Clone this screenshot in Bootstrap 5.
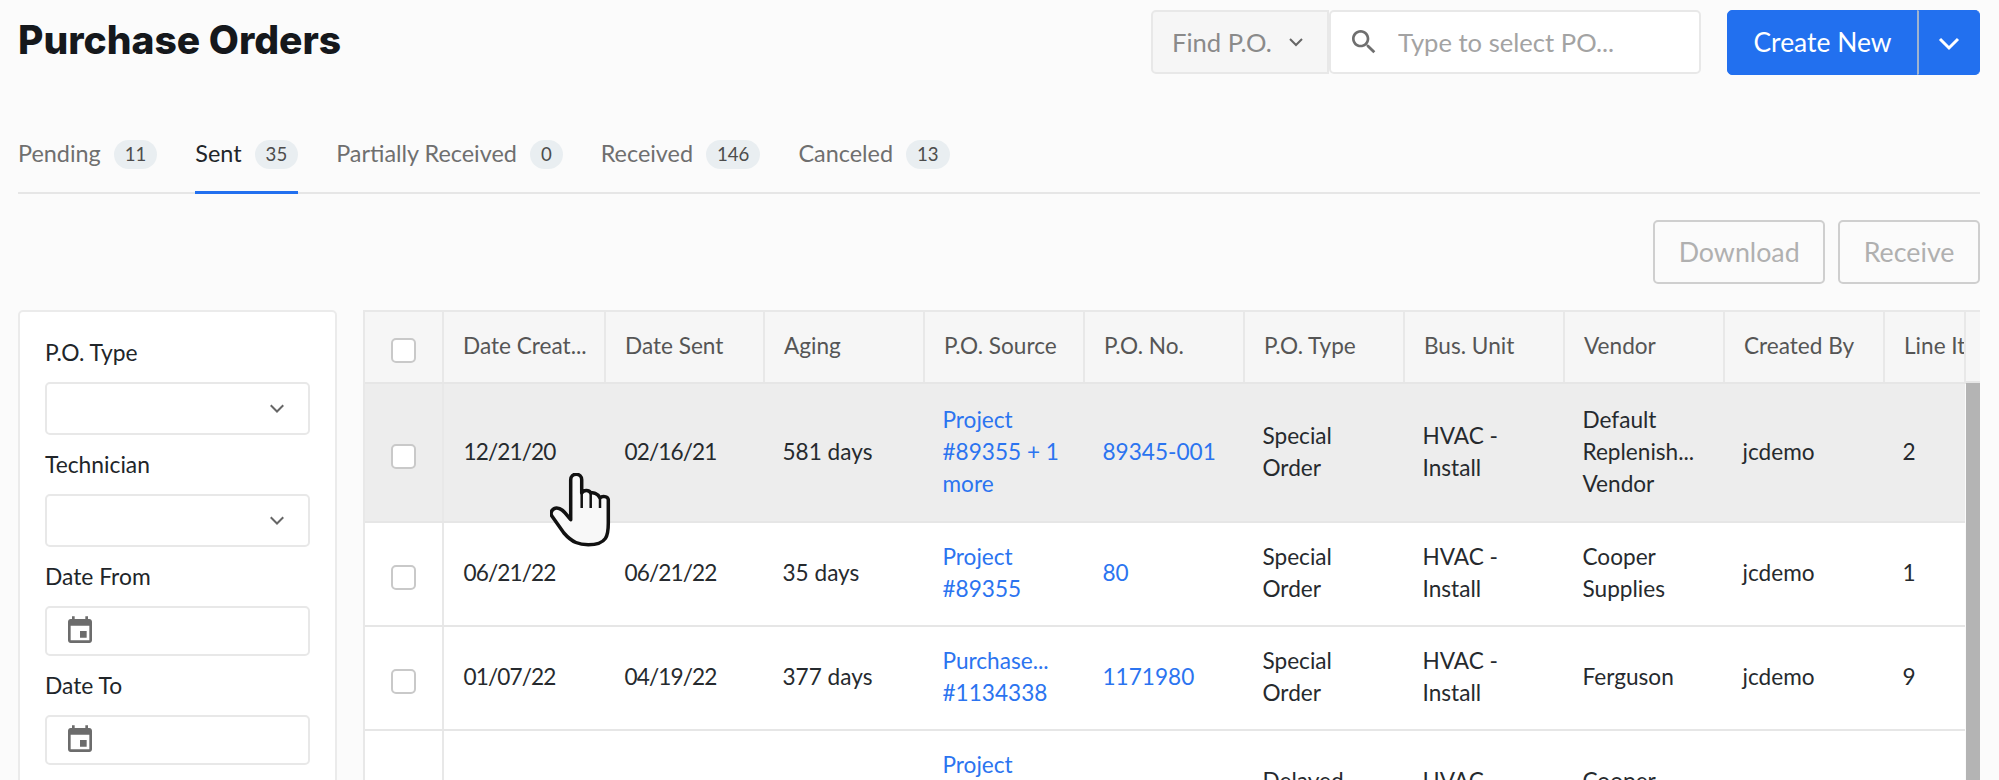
<!DOCTYPE html>
<html lang="en">
<head>
    <meta charset="UTF-8">
    <meta name="viewport" content="width=device-width, initial-scale=1.0">
    <title>Purchase Orders</title>
    <link href="https://cdn.jsdelivr.net/npm/bootstrap@5.3.3/dist/css/bootstrap.min.css" rel="stylesheet"/>
    <style>
        html, body { height: 100%; }
        body { background: #fbfbfb; font-family: "Lato", "Liberation Sans", sans-serif; font-size: 22.6px; color: #212529; overflow: hidden; position: relative; }
        .po-page { padding: 10px 19px 0 18px; height: 780px; overflow: hidden; }
        .po-head { height: 65px; }
        .po-title { font-family: "Inter", "Lato", sans-serif; font-size: 39px; font-weight: 800; color: #15181c; margin: 0; line-height: 60px; }
        .find-box { width: 178px; height: 64px; border: 2px solid #e8e8e8; border-radius: 5px 0 0 5px; background: #f6f6f6; color: #8a8a8a; font-size: 25.6px; padding-left: 19px; }
        .find-box svg { margin-left: 16px; }
        .find-input { width: 372px; height: 64px; border: 2px solid #e8e8e8; border-radius: 5px; background: #fff; padding-left: 17px; }
        .find-input input { border: 0; outline: 0; background: transparent; font-size: 25.6px; margin-left: 18px; width: 300px; padding: 0; color: #333; }
        .find-input input::placeholder { color: #a3a3a3; }
        .create-group { margin-left: 26px; }
        .btn.create-btn { background: #2270ef; border-color: #2270ef; color: #fff; font-size: 26.4px; height: 65px; width: 191px; border-radius: 5px 0 0 5px; padding: 0; }
        .btn.create-drop { background: #2270ef; border-color: #2270ef; border-left: 2px solid #9fb3cf; height: 65px; width: 63px; border-radius: 0 5px 5px 0; padding: 0; }
        .po-tabs { margin-top: 55px; border-bottom: 2px solid #e6e6e6; height: 64px; gap: 38px; }
        .po-tabs .nav-link { color: #6f6f6f; padding: 9px 0 0; height: 64px; font-size: 23.4px; display: flex; align-items: flex-start; gap: 13px; line-height: 29px; }
        .po-tabs .nav-link.active { color: #212529; border-bottom: 3px solid #2270ef; margin-bottom: -1px; }
        .tab-count { background: #e9eef1; color: #4c4c4c; font-size: 18.6px; border-radius: 15px; height: 29px; line-height: 29px; padding: 0 11px; margin-top: 1px; }
        .po-actions { margin-top: 26px; height: 64px; gap: 13px; }
        .btn.act-btn { height: 64px; border: 2px solid #cfcfcf; border-radius: 5px; background: transparent; color: #b0b0b0; font-size: 26.8px; padding: 0 23.5px; opacity: 1; }
        .po-main { margin-top: 26px; gap: 26px; }
        .filter-card { width: 319px; height: 600px; flex: none; border: 2px solid #ebebeb; border-radius: 5px; background: #fff; padding: 11px 25px; }
        .filter-card label { display: block; height: 59px; line-height: 59px; margin: 0; font-size: 22.8px; color: #212529; }
        .filter-select { height: 53px; border: 2px solid #e8e8e8; border-radius: 5px; background-color: #fff; background-size: 20px; background-position: right 21px center; background-image: url("data:image/svg+xml,%3csvg xmlns='http://www.w3.org/2000/svg' viewBox='0 0 16 16'%3e%3cpath fill='none' stroke='%23666' stroke-width='1.6' d='M3 5l5 5 5-5'/%3e%3c/svg%3e"); }
        .filter-date { height: 50px; border: 2px solid #e8e8e8; border-radius: 5px; background: #fff; padding-left: 17px; }
        .table-wrap { flex: 1; min-width: 0; border-top: 2px solid #e8e8e8; border-left: 2px solid #e8e8e8; }
        .table.po-table { table-layout: fixed; width: 1601px; margin: 0; flex: none; font-size: 22.6px; line-height: 32px; }
        .table.po-table th { background: #f6f6f6; color: #555; font-weight: 400; height: 71px; padding: 0 0 2px 19px; white-space: nowrap; overflow: hidden; vertical-align: middle; border: 0; border-bottom: 2px solid #e6e6e6; border-right: 2px solid #e8e8e8; }
        .table.po-table td { background: #fff; color: #262a2e; padding: 0 0 2px 18.5px; vertical-align: middle; border: 0; border-bottom: 2px solid #e6e6e6; white-space: nowrap; overflow: hidden; }
        .table.po-table tr.row-over td { background: #ededed; }
        .table.po-table .cell-check { padding: 0; text-align: center; border-right: 2px solid #e8e8e8; }
        .table.po-table a { color: #2b74f0; text-decoration: none; }
        .table.po-table .cell-date { letter-spacing: -.9px; padding-left: 19.5px; }
        .po-check.form-check-input { width: 25px; height: 25px; margin: 7px 0 0; border: 2px solid #c9c9c9; border-radius: 5px; background-color: #fff; float: none; }
        .row-a { height: 139px; }
        .row-b { height: 104px; }
        .row-c { height: 136px; }
        .bar-col { width: 14px; flex: none; }
        .bar-head { height: 71px; background: #f6f6f6; border-bottom: 2px solid #e6e6e6; }
        .bar-thumb { height: 500px; background: #b4b4b4; }
        .hand-cursor { position: absolute; left: 550px; top: 473px; width: 62px; height: 76px; }
    </style>
</head>
<body>
    <main class="po-page">
        <div class="po-head d-flex justify-content-between align-items-start">
            <h1 class="po-title">Purchase Orders</h1>
            <div class="d-flex">
                <div class="find-box d-flex align-items-center">Find P.O.
                    <svg width="16" height="12" viewBox="0 0 16 12"><path d="M2 3l6 6 6-6" fill="none" stroke="#666" stroke-width="2"/></svg>
                </div>
                <div class="find-input d-flex align-items-center">
                    <svg width="32" height="32" viewBox="0 0 24 24" fill="#6f6f6f"><path d="M15.5 14h-.79l-.28-.27C15.41 12.59 16 11.11 16 9.5 16 5.91 13.09 3 9.5 3S3 5.91 3 9.5 5.91 16 9.5 16c1.61 0 3.09-.59 4.23-1.57l.27.28v.79l5 4.99L20.49 19l-4.99-5zm-6 0C7.01 14 5 11.99 5 9.5S7.01 5 9.5 5 14 7.01 14 9.5 11.99 14 9.5 14z"/></svg>
                    <input type="text" placeholder="Type to select PO...">
                </div>
                <div class="btn-group create-group">
                    <button type="button" class="btn create-btn">Create New</button>
                    <button type="button" class="btn create-drop">
                        <svg width="22" height="14" viewBox="0 0 22 14"><path d="M2 2l9 9 9-9" fill="none" stroke="#fff" stroke-width="3"/></svg>
                    </button>
                </div>
            </div>
        </div>

        <nav class="nav po-tabs">
            <a class="nav-link" href="#">Pending <span class="tab-count">11</span></a>
            <a class="nav-link active" href="#">Sent <span class="tab-count">35</span></a>
            <a class="nav-link" href="#">Partially Received <span class="tab-count">0</span></a>
            <a class="nav-link" href="#">Received <span class="tab-count">146</span></a>
            <a class="nav-link" href="#">Canceled <span class="tab-count">13</span></a>
        </nav>

        <div class="po-actions d-flex justify-content-end">
            <button type="button" class="btn act-btn" disabled>Download</button>
            <button type="button" class="btn act-btn" disabled>Receive</button>
        </div>

        <div class="po-main d-flex">
            <aside class="filter-card">
                <label>P.O. Type</label>
                <select class="form-select filter-select"></select>
                <label>Technician</label>
                <select class="form-select filter-select"></select>
                <label>Date From</label>
                <div class="filter-date d-flex align-items-center">
                    <svg width="32" height="32" viewBox="0 0 24 24" fill="#6c6c6c"><path d="M17 12h-5v5h5v-5zM16 1v2H8V1H6v2H5c-1.11 0-1.99.9-1.99 2L3 19c0 1.1.89 2 2 2h14c1.1 0 2-.9 2-2V5c0-1.1-.9-2-2-2h-1V1h-2zm3 18H5V8h14v11z"/></svg>
                </div>
                <label>Date To</label>
                <div class="filter-date d-flex align-items-center">
                    <svg width="32" height="32" viewBox="0 0 24 24" fill="#6c6c6c"><path d="M17 12h-5v5h5v-5zM16 1v2H8V1H6v2H5c-1.11 0-1.99.9-1.99 2L3 19c0 1.1.89 2 2 2h14c1.1 0 2-.9 2-2V5c0-1.1-.9-2-2-2h-1V1h-2zm3 18H5V8h14v11z"/></svg>
                </div>
            </aside>

            <div class="table-wrap d-flex align-items-start">
                <table class="table po-table">
                    <colgroup>
                        <col style="width:78px"><col style="width:162px"><col style="width:159px"><col style="width:160px"><col style="width:160px"><col style="width:160px"><col style="width:160px"><col style="width:160px"><col style="width:160px"><col style="width:160px"><col>
                    </colgroup>
                    <thead>
                        <tr>
                            <th class="cell-check"><input class="form-check-input po-check" type="checkbox"></th>
                            <th>Date Creat...</th>
                            <th>Date Sent</th>
                            <th>Aging</th>
                            <th>P.O. Source</th>
                            <th>P.O. No.</th>
                            <th>P.O. Type</th>
                            <th>Bus. Unit</th>
                            <th>Vendor</th>
                            <th>Created By</th>
                            <th>Line Items</th>
                        </tr>
                    </thead>
                    <tbody>
                        <tr class="row-a row-over">
                            <td class="cell-check"><input class="form-check-input po-check" type="checkbox"></td>
                            <td class="cell-date">12/21/20</td>
                            <td class="cell-date">02/16/21</td>
                            <td>581 days</td>
                            <td><a href="#">Project<br>#89355 + 1<br>more</a></td>
                            <td><a href="#">89345-001</a></td>
                            <td>Special<br>Order</td>
                            <td>HVAC -<br>Install</td>
                            <td>Default<br>Replenish...<br>Vendor</td>
                            <td>jcdemo</td>
                            <td>2</td>
                        </tr>
                        <tr class="row-b">
                            <td class="cell-check"><input class="form-check-input po-check" type="checkbox"></td>
                            <td class="cell-date">06/21/22</td>
                            <td class="cell-date">06/21/22</td>
                            <td>35 days</td>
                            <td><a href="#">Project<br>#89355</a></td>
                            <td><a href="#">80</a></td>
                            <td>Special<br>Order</td>
                            <td>HVAC -<br>Install</td>
                            <td>Cooper<br>Supplies</td>
                            <td>jcdemo</td>
                            <td>1</td>
                        </tr>
                        <tr class="row-b">
                            <td class="cell-check"><input class="form-check-input po-check" type="checkbox"></td>
                            <td class="cell-date">01/07/22</td>
                            <td class="cell-date">04/19/22</td>
                            <td>377 days</td>
                            <td><a href="#">Purchase...<br>#1134338</a></td>
                            <td><a href="#">1171980</a></td>
                            <td>Special<br>Order</td>
                            <td>HVAC -<br>Install</td>
                            <td>Ferguson</td>
                            <td>jcdemo</td>
                            <td>9</td>
                        </tr>
                        <tr class="row-c">
                            <td class="cell-check"><input class="form-check-input po-check" type="checkbox"></td>
                            <td class="cell-date">03/14/22</td>
                            <td class="cell-date">04/19/22</td>
                            <td>377 days</td>
                            <td><a href="#">Project<br>#89355 + 1<br>more</a></td>
                            <td><a href="#">1201702</a></td>
                            <td>Delayed<br>Order</td>
                            <td>HVAC -<br>Install</td>
                            <td>Cooper<br>Supplies</td>
                            <td>jcdemo</td>
                            <td>3</td>
                        </tr>
                    </tbody>
                </table>
                <div class="bar-col">
                    <div class="bar-head"></div>
                    <div class="bar-thumb"></div>
                </div>
            </div>
        </div>
    </main>

    <svg class="hand-cursor" viewBox="0 0 62 76">
        <path d="M20.7 46.7V6.7a5.5 5.5 0 0 1 11 0V20c2-3 7-3.500 9 0 2-.5 7 0 9.300 5 2-2.500 8-1.700 8.300 1.700V50c0 12-1 21.700-20 21.700-9 0-16-2-24.400-11.700L1.700 42.700c-2-4 1.500-7.700 5-7.700 6 0 9 6 14 11.700z" fill="#f8f8f8" stroke="#111" stroke-width="3.500" stroke-linejoin="round"/>
        <path d="M31.700 20v15M40.700 20v15M50 25v10" fill="none" stroke="#111" stroke-width="2.500"/>
    </svg>

    <script src="https://cdn.jsdelivr.net/npm/bootstrap@5.3.3/dist/js/bootstrap.bundle.min.js"></script>
</body>
</html>
